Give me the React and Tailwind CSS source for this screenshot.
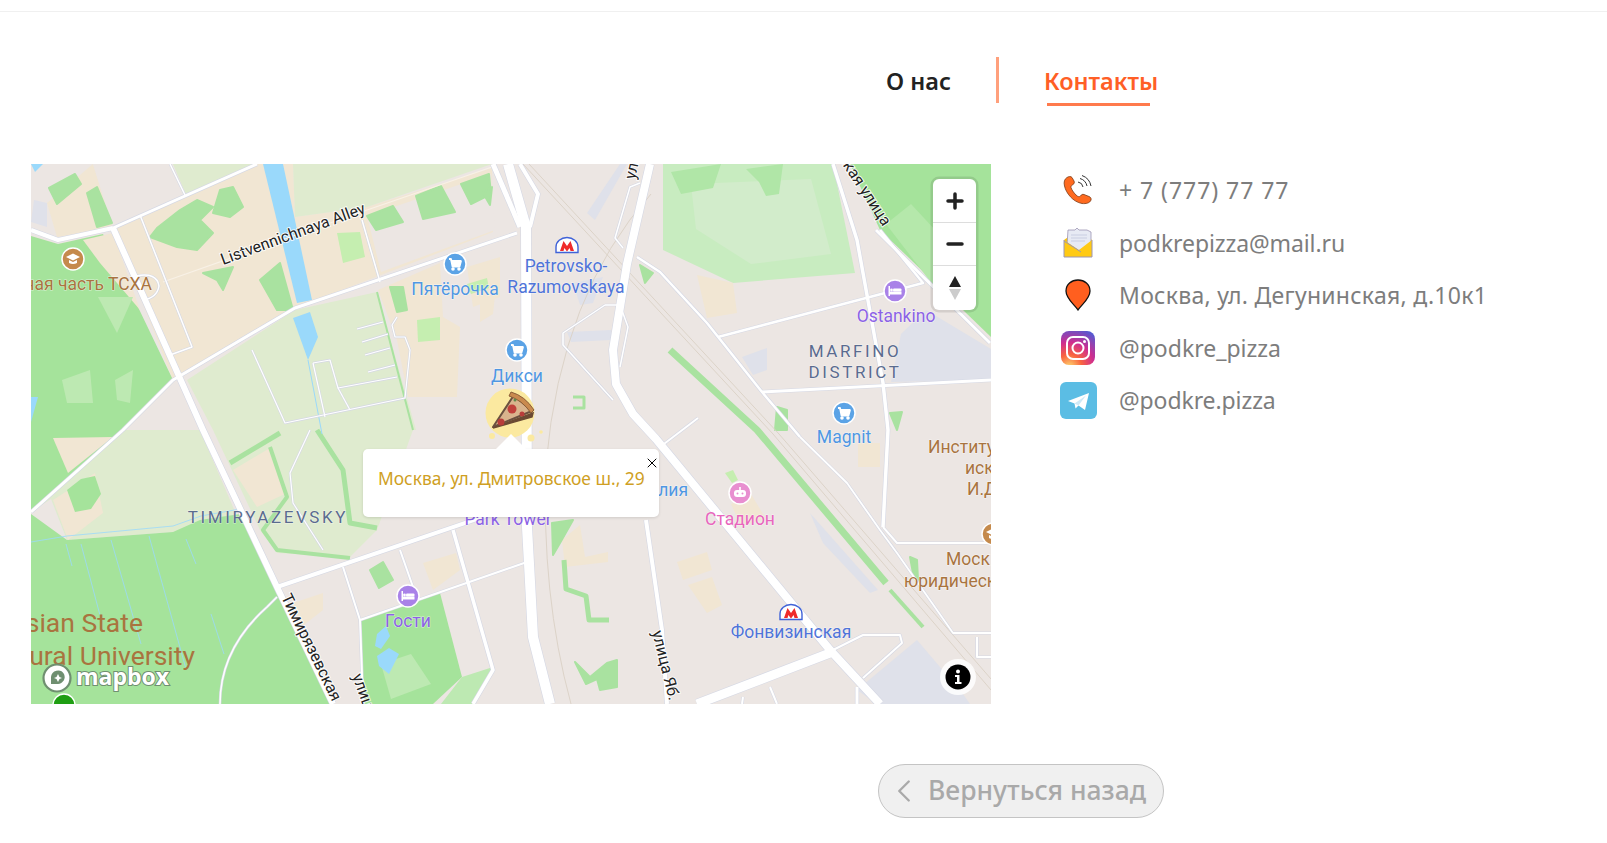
import React from 'react';
import { ChevronLeft, X } from 'lucide-react';

const FONT = "[font-family:'Noto_Sans',sans-serif]";
const MAP_FONT = "[font-family:'Roboto',sans-serif]";

const BROWN = '#a9743f';
const BLUE = '#4f97e3';
const METRO = '#4f74d9';
const PURPLE = '#8c62e6';
const SLATE = '#5a6b8f';

// all shapes are in map coordinates (960x540)
const polys = [
    // beige blocks
    ['#f1e6d3', '82,64 226,0 262,0 264,53 336,43 461,4 462,68 264,144 142,216'],
    ['#ece6e3', '336,52 460,10 464,66 350,108'],
    ['#f1e6d3', '347,126 409,99 412,153 429,163 426,233 377,233 366,176'],
    ['#f1e6d3', '436,103 469,93 469,133 442,143'],
    ['#f1e6d3', '16,39 62,0 82,64 26,73'],
    ['#ece6e3', '62,0 150,0 226,0 120,48 82,64'],
    ['#dfebcf', '142,0 226,0 155,31'],
    ['#dfebcf', '262,0 461,0 336,43 264,53'],
    // parks
    ['#a5e39b', '0,72 27,80 72,70 142,216 92,266 0,348'],
    ['#f1e6d3', '52,76 82,69 109,146 69,99'],
    ['#dfebcf', '0,348 92,266 169,266 205,350 142,368 36,376 20,335'],
    ['#a5e39b', '0,350 36,376 142,368 169,356 209,350 246,423 302,540 0,540'],
    ['#dfebcf', '156,216 264,146 346,128 385,266 182,266'],
    ['#dfebcf', '182,266 382,266 346,366 319,393 246,389 229,366'],
    ['#f1e6d3', '22,274 82,273 37,309'],
    ['#f1e6d3', '22,336 64,309 72,349 37,376'],
    ['#a5e39b', '36,326 50,315 64,312 70,330 60,345 44,348'],
    ['#f1e6d3', '202,306 239,284 256,329 226,343'],
    ['#bde9b2', '31,216 59,206 62,239 36,239'],
    ['#bde9b2', '84,216 102,206 99,239 86,236'],
    ['#bde9b2', '67,133 102,133 86,169'],
    // north park
    ['#c8ecc0', '632,0 802,0 824,109 702,119 632,86'],
    ['#d2eccb', '660,20 780,15 800,90 720,100 665,65'],
    ['#a5e39b', '819,0 960,0 960,173 849,66'],
    ['#b5e8ab', '855,60 880,40 945,110 905,125'],
    ['#b0e6a7', '715,5 752,0 748,30 735,32 728,18'],
    ['#b0e6a7', '640,8 690,0 682,24 650,30'],
    // south park
    ['#a5e39b', '329,456 409,429 431,513 402,540 332,540'],
    ['#bde9b2', '431,513 462,503 442,540 410,540'],
    ['#bde9b2', '350,500 380,490 400,520 360,535'],
    // beige
    ['#f1e6d3', '666,111 702,119 706,149 676,154'],
    ['#f1e6d3', '392,399 425,389 429,406 402,426'],
    ['#f1e6d3', '262,439 292,429 292,446 269,464'],
    ['#f1e6d3', '646,398 676,388 681,406 652,416'],
    ['#f1e6d3', '657,421 681,413 691,441 676,449'],
    ['#f1e6d3', '531,376 549,361 554,393 577,388 577,398 534,403'],
    ['#f1e6d3', '827,279 849,279 849,303 827,303'],
    ['#f1e6d3', '700,340 720,330 735,355 710,362'],
    ['#f1e6d3', '449,104 468,94 462,150 449,158'],
    // grey blue
    ['#dfe1ea', '895,146 960,185 960,216 860,218 870,170'],
    ['#dfe1ea', '711,193 736,184 736,206 722,211'],
    ['#dfe1ea', '556,49 589,0 596,0 564,56'],
    ['#dfe1ea', '536,168 580,166 580,176 540,178'],
    ['#dfe1ea', '542,119 572,113 562,139 549,141'],
    ['#dfe1ea', '826,526 886,476 932,530 939,540 846,540'],
    ['#dfe1ea', '779,349 847,426 839,429 792,379'],
    ['#dfe1ea', '3,36 16,39 16,63 0,58'],
    // water
    ['#9ad9fb', '232,0 252,0 281,136 266,139'],
    ['#9ad9fb', '262,154 279,148 287,173 277,196'],
    ['#9ad9fb', '0,233 7,233 0,258'],
    ['#9ad9fb', '346,470 355,462 359,472 350,485 344,482'],
    ['#9ad9fb', '346,492 358,484 368,490 358,510 348,502'],
    ['#9ad9fb', '0,0 12,0 4,8'],
    // tree patches
    ['#a9e2a0', '149,46 166,36 182,43 169,56 182,69 166,86 146,83 119,73 126,64'],
    ['#a9e2a0', '189,26 202,23 212,43 199,53 182,49'],
    ['#a9e2a0', '229,116 249,99 262,146 246,146'],
    ['#a9e2a0', '172,109 202,103 192,126 186,116'],
    ['#a9e2a0', '56,29 66,23 81,59 66,63'],
    ['#a9e2a0', '18,24 44,10 50,20 26,40'],
    ['#a9e2a0', '336,52 362,42 372,58 345,66'],
    ['#a9e2a0', '385,32 410,22 424,48 392,55'],
    ['#a9e2a0', '430,20 458,10 460,30 440,40'],
    ['#a9e2a0', '359,123 372,123 376,146 366,148'],
    ['#c5eeb0', '306,69 329,68 334,93 312,99'],
    ['#c5eeb0', '386,156 409,153 409,176 387,178'],
    ['#c5eeb0', '436,120 456,114 458,124 440,130'],
    ['#a9e2a0', '452,29 461,23 459,41'],
    ['#a9e2a0', '609,101 622,109 614,119'],
    ['#a9e2a0', '746,243 756,246 756,266 744,266'],
    ['#a9e2a0', '859,249 871,248 866,266'],
    ['#a9e2a0', '521,359 542,356 529,379 522,391'],
    ['#a9e2a0', '544,498 559,513 576,499 586,496 586,523 569,526 566,515 555,520'],
    ['#a9e2a0', '879,393 886,396 887,416 882,409'],
    ['#c5eeb0', '694,309 702,306 707,316 701,319'],
    ['#a9e2a0', '339,406 352,398 362,416 348,424'],
];

const greenLines = [
    ['M199 299 L249 269', 5],
    ['M239 283 L256 333 L232 366 L246 386 L319 394', 4],
    ['M286 266 L312 306 L319 359 L346 364', 5],
    ['M346 128 L382 266', 2],
    ['M639 186 L726 266 L855 419', 7],
    ['M859 426 L892 463', 4],
    ['M533 396 L535 425 L555 432 L558 456 L578 456', 5],
    ['M542 233 H553 V244 H542', 3],
];

const rails = ['M492 0 L742 270 L960 526', 'M498 0 L748 270 L960 515', 'M620 30 Q530 130 515 300 Q510 430 540 540'];

const roads = [
    ['M82 64 L172 266 L246 423 L302 540', 6],
    ['M0 66 L27 76 L82 64', 4],
    ['M82 64 L226 0', 3],
    ['M105 112 Q126 108 128 122 Q126 134 112 136', 1.5],
    ['M109 51 L161 183 L139 191', 1.5],
    ['M331 56 L349 118', 1.5],
    ['M139 0 L154 31', 1.5],
    ['M486 69 L264 144 L142 216 L92 266 L0 348', 3],
    ['M221 186 L254 259 L374 234 L379 186 L374 173 L364 173 L361 161 L366 153', 1.2],
    ['M282 199 L299 196 L307 224 L366 213', 1.2],
    ['M282 199 L294 253', 1.2],
    ['M307 224 L319 246', 1.2],
    ['M326 165 L352 158', 1.2],
    ['M331 178 L357 170', 1.2],
    ['M334 191 L359 184', 1.2],
    ['M337 208 L364 201', 1.2],
    ['M279 266 L259 309 L262 339 L292 386', 1.2],
    ['M246 433 L236 443 Q189 485 189 540', 1.5],
    ['M246 423 L490 340', 4],
    ['M312 403 L329 456 L332 540', 2],
    ['M329 456 L496 398', 2],
    ['M422 366 L462 506 L442 540', 3.5],
    ['M369 386 L382 423', 2],
    ['M462 0 L489 63', 5],
    ['M489 0 L507 30 L499 63', 4],
    ['M477 0 L495 63 L496 363 L502 473 L519 540', 10],
    ['M615 356 L631 466 L636 540', 4],
    ['M619 0 L596 100 L582 186 L585 220 L602 250 L625 275 L799 486 L849 540', 8],
    ['M609 19 L599 23 L584 74 L592 84', 1.5],
    ['M574 141 L532 169 L532 181 L582 236', 1.5],
    ['M574 141 L589 141 L597 163 L589 203', 1.5],
    ['M492 73 L492 149', 1.2],
    ['M629 283 L667 254', 2],
    ['M666 540 L799 489', 9],
    ['M802 486 L832 471 L869 471 L871 479 L832 514', 2],
    ['M712 533 L711 540', 2],
    ['M739 523 L746 540', 2],
    ['M826 523 L826 540', 3],
    ['M769 273 L816 319 L849 366 L866 389 L922 469 L960 469', 1.8],
    ['M852 363 L866 379 L960 379', 2],
    ['M946 473 L946 493 L960 493', 2],
    ['M687 173 L892 119 L849 66', 2.5],
    ['M845 66 L959 179', 3],
    ['M802 0 L826 76 L852 219 L857 266 L852 363', 3.5],
    ['M731 228 L960 216', 3],
    ['M606 93 L629 108 L676 159 L731 228 L769 273', 2.5],
];

const labels = [
    { t: 'ная часть ТСХА', x: 121, y: 126, c: BROWN, a: 'end' },
    { t: 'Пятёрочка', x: 424, y: 131, c: BLUE },
    { t: 'Дикси', x: 486, y: 218, c: BLUE },
    { t: 'Petrovsko-', x: 535, y: 108, c: METRO },
    { t: 'Razumovskaya', x: 535, y: 129, c: METRO },
    { t: 'Ostankino', x: 865, y: 158, c: PURPLE },
    { t: 'Magnit', x: 813, y: 279, c: BLUE },
    { t: 'Институт', x: 897, y: 289, c: BROWN, a: 'start' },
    { t: 'иск', x: 934, y: 310, c: BROWN, a: 'start' },
    { t: 'И.Д.', x: 936, y: 331, c: BROWN, a: 'start' },
    { t: 'Моск', x: 915, y: 401, c: BROWN, a: 'start' },
    { t: 'юридическ', x: 873, y: 423, c: BROWN, a: 'start' },
    { t: 'Стадион', x: 709, y: 361, c: '#e866bd' },
    { t: 'Фонвизинская', x: 760, y: 474, c: METRO },
    { t: 'олия', x: 657, y: 332, c: BLUE, a: 'end' },
    { t: 'Park Tower', x: 477, y: 361, c: PURPLE },
    { t: 'Гости', x: 377, y: 463, c: PURPLE },
];

const districts = [
    { t: 'MARFINO', x: 824, y: 193 },
    { t: 'DISTRICT', x: 824, y: 214 },
    { t: 'TIMIRYAZEVSKY', x: 237, y: 359 },
];

const streets = [
    { t: 'Listvennichnaya Alley', x: 192, y: 101, r: -20, a: 'start' },
    { t: 'Тимирязевская', x: 250, y: 433, r: 64, a: 'start' },
    { t: 'улица', x: 321, y: 512, r: 70, a: 'start' },
    { t: 'улица Яб.', x: 621, y: 468, r: 76, a: 'start' },
    { t: 'ул', x: 604, y: 16, r: -78, a: 'start' },
    { t: 'ская улица', x: 807, y: -6, r: 57, a: 'start' },
];

const Poi = ({ x, y, color, children }) => (
    <g transform={`translate(${x} ${y})`}>
        <circle r="11" fill={color} stroke="#fff" strokeWidth="1.5" />
        {children}
    </g>
);

const Cart = () => (
    <g fill="none" stroke="#fff" strokeWidth="1.8" strokeLinejoin="round">
        <path d="M-6 -5 H-4 L-2.5 2.5 H4.5 L6 -3 H-3.5" fill="#fff" />
        <circle cx="-2" cy="5" r="0.9" fill="#fff" />
        <circle cx="4" cy="5" r="0.9" fill="#fff" />
    </g>
);

const Bed = () => (
    <g fill="#fff">
        <rect x="-6.5" y="-5" width="1.5" height="10" />
        <rect x="-5" y="0.5" width="11.5" height="3" />
        <rect x="-2" y="-2.5" width="8.5" height="3" rx="1" />
        <circle cx="-3.5" cy="-1" r="1.4" />
    </g>
);

const Cap = () => (
    <g fill="#fff">
        <path d="M-7 -2 L0 -5.5 L7 -2 L0 1.5 Z" />
        <path d="M-4 1 V4 Q0 6 4 4 V1 L0 3 Z" />
    </g>
);

const Robot = () => (
    <g fill="#fff">
        <rect x="-6" y="-3" width="12" height="7" rx="3" />
        <rect x="-0.8" y="-6" width="1.6" height="3" />
        <circle cx="-2.5" cy="0.5" r="1" fill="#e88fd0" />
        <circle cx="2.5" cy="0.5" r="1" fill="#e88fd0" />
    </g>
);

const Metro = ({ x, y }) => (
    <g transform={`translate(${x} ${y})`}>
        <path d="M-11 7.5 V2 A11 9.5 0 0 1 11 2 V7.5 Z" fill="#fff" stroke="#3f62d8" strokeWidth="1.4" />
        <path d="M-7 6 L-3.5 -4 L0 1 L3.5 -4 L7 6 H3.5 L2.6 3 L0 6.5 L-2.6 3 L-3.5 6 Z" fill="#ef2b2b" />
    </g>
);

const MapLayer = () => (
    <svg viewBox="0 0 960 540" className="w-full h-full block bg-[#ece6e3]">
        {polys.map(([fill, points], i) => (
            <polygon key={i} points={points} fill={fill} stroke={fill === '#a9e2a0' ? fill : 'none'} strokeWidth="2" strokeLinejoin="round" />
        ))}
        {greenLines.map(([d, w], i) => <path key={i} d={d} fill="none" stroke="#a9e2a0" strokeWidth={w} strokeLinejoin="round" />)}
        <path d="M277 196 L291 270" stroke="#9ad9fb" strokeWidth="1" fill="none" />
        <path d="M0 378 L36 372 L142 362 L170 352 L209 345" stroke="#9ad9fb" strokeWidth="0.8" fill="none" />
        <path d="M35 380 L41 402 M50 380 L70 455 M80 376 L110 480 M118 372 L155 505 M155 375 L165 400 M180 450 L193 490" stroke="#9ad9fb" strokeWidth="0.8" fill="none" />
        {rails.map((d, i) => <path key={i} d={d} fill="none" stroke="#dcd3c8" strokeWidth="1" />)}
        <path d="M132 118 L336 46 L461 3" fill="none" stroke="#f8f1e6" strokeWidth="1.2" />
        {roads.map(([d, w], i) => <path key={i} d={d} fill="none" stroke="#d5d8e4" strokeWidth={w + 1.2} strokeLinejoin="round" />)}
        {roads.map(([d, w], i) => <path key={i} d={d} fill="none" stroke="#fff" strokeWidth={w} strokeLinejoin="round" />)}

        <g className={MAP_FONT} fontSize="17.5" stroke="#fff" strokeWidth="1" strokeOpacity="0.6">
            {labels.map(l => (
                <text key={l.t} x={l.x} y={l.y} fill={l.c} textAnchor={l.a || 'middle'} className="[paint-order:stroke]">{l.t}</text>
            ))}
        </g>
        <g className={MAP_FONT} fontSize="17" fill={SLATE} letterSpacing="2.6" textAnchor="middle" stroke="#fff" strokeWidth="1" strokeOpacity="0.5">
            {districts.map(l => <text key={l.t} x={l.x} y={l.y} className="[paint-order:stroke]">{l.t}</text>)}
        </g>
        <g className={MAP_FONT} fontSize="16" fill="#222" stroke="#fff" strokeWidth="2" strokeOpacity="0.85">
            {streets.map(l => (
                <text key={l.t} x={l.x} y={l.y} transform={`rotate(${l.r} ${l.x} ${l.y})`} className="[paint-order:stroke]">{l.t}</text>
            ))}
        </g>
        <g className={MAP_FONT} fontSize="26.5" fill={BROWN} textAnchor="end">
            <text x="112" y="468">Russian State</text>
            <text x="164" y="501">Agricultural University</text>
        </g>

        <Poi x={42} y={95} color="#c58a4c"><Cap /></Poi>
        <Poi x={424} y={100} color="#5ba3e6"><Cart /></Poi>
        <Poi x={486} y={186} color="#5ba3e6"><Cart /></Poi>
        <Poi x={813} y={249} color="#5ba3e6"><Cart /></Poi>
        <Poi x={864} y={127} color="#a982e8"><Bed /></Poi>
        <Poi x={377} y={432} color="#a982e8"><Bed /></Poi>
        <Poi x={709} y={329} color="#e88fd0"><Robot /></Poi>
        <Poi x={962} y={370} color="#c58a4c"><Cap /></Poi>
        <Metro x={536} y={81} />
        <Metro x={760} y={448} />
        <circle cx="33" cy="541" r="11" fill="#1e9e12" stroke="#fff" strokeWidth="1.5" />

        {/* pizza marker */}
        <circle cx="479" cy="249" r="24.5" fill="#fbe9a0" />
        <circle cx="461" cy="272" r="3" fill="#fbe9a0" />
        <circle cx="500" cy="274" r="3.5" fill="#fbe9a0" />
        <circle cx="510" cy="268" r="1.8" fill="#fbe9a0" />
        <path d="M462 263 L483 231 L501 247 Z" fill="#d9b48d" stroke="#6b5140" strokeWidth="2" strokeLinejoin="round" />
        <path d="M480 228 Q494 232 503 246 L500 249 Q491 236 478 232 Z" fill="#c98a4e" stroke="#8a5c36" strokeWidth="1" />
        <path d="M462 264 L502 249 L501 253 Z" fill="#6b4a33" stroke="#6b4a33" strokeWidth="1.5" />
        <circle cx="481" cy="245" r="4.5" fill="#c0413b" />
        <circle cx="470" cy="258" r="3.5" fill="#b83d3a" />
        <circle cx="491" cy="250" r="2.5" fill="#b83d3a" />
        <circle cx="484" cy="236" r="1.5" fill="#5f8a4a" />

        {/* mapbox logo */}
        <circle cx="26" cy="514" r="13.5" fill="#fff" stroke="#6f8f70" strokeWidth="2.2" />
        <path d="M20 520 L20 513 A7 7 0 0 1 33 510 A7 7 0 0 1 27 520 Z" fill="#6f8f70" />
        <path d="M27 510 L28.5 513 L31 514 L28.5 515 L27 518 L25.500 515 L23 514 L25.500 513 Z" fill="#fff" />
        <text x="45" y="521" fontSize="23" fontWeight="700" fill="#fff" stroke="#6f8f70" strokeWidth="2" className="[font-family:'Open_Sans',sans-serif] [paint-order:stroke]">mapbox</text>
    </svg>
);

const MapControls = () => (
    <div className="absolute top-[15px] right-[15px] w-[43px] bg-white rounded-[6px] shadow-[0_0_0_2.500px_rgba(0,0,0,0.1)] flex flex-col">
        <button className="h-[44px] flex items-center justify-center border-b border-[#ddd]">
            <svg width="20" height="20" viewBox="0 0 20 20"><path d="M10 3 V17 M3 10 H17" stroke="#222" strokeWidth="3.5" strokeLinecap="round" /></svg>
        </button>
        <button className="h-[43px] flex items-center justify-center border-b border-[#ddd]">
            <svg width="20" height="20" viewBox="0 0 20 20"><path d="M3 10 H17" stroke="#222" strokeWidth="3.5" strokeLinecap="round" /></svg>
        </button>
        <button className="h-[44px] flex items-center justify-center">
            <svg width="14" height="30" viewBox="0 0 14 30">
                <path d="M1 14 L7 3 L13 14 Z" fill="#222" />
                <path d="M1 16 L7 27 L13 16 Z" fill="#ccc" />
            </svg>
        </button>
    </div>
);

const MapInfo = () => (
    <div className="absolute left-[909px] top-[495px] w-[36px] h-[36px] rounded-full bg-white/85 flex items-center justify-center">
        <svg width="26" height="26" viewBox="0 0 26 26">
            <circle cx="13" cy="13" r="12.500" fill="#000" />
            <circle cx="13" cy="7.500" r="2" fill="#fff" />
            <path d="M10 11 H14.500 V18 H16.500 V20 H10 V18 H12 V13 H10 Z" fill="#fff" />
        </svg>
    </div>
);

const MapPopup = () => (
    <div className="absolute left-[332px] top-[285px] w-[296px] h-[68px] bg-white rounded-[5px] shadow-[0_1px_3px_rgba(0,0,0,0.12)] pt-[17px] pl-[15px]">
        <div className="absolute -top-[15px] left-[133px] w-0 h-0 border-x-[15px] border-b-[15px] border-x-transparent border-b-white" />
        <X className="absolute top-[6px] -right-[1px] w-[16px] h-[16px] text-black" strokeWidth={1.5} />
        <p className="text-[17.4px] leading-[24px] text-[#cf9f24] whitespace-nowrap">Москва, ул. Дмитровское ш., 29</p>
    </div>
);

const PhoneIcon = () => (
    <svg width="30" height="30" viewBox="0 0 30 30">
        <path d="M4 2.500 C1.500 4 0.500 7 1.500 11 C3 18 10 27 19 28.500 C23 29 27 28 28 25 C28.500 23.500 27.500 22 26 21.500 L21 19.500 C19.500 19 18.500 19.500 17.500 21 C16.500 22 15 22 13 20 C10.500 17.500 8.500 14.500 8 12.500 C7.800 11 8.500 10.500 10 9.500 C11.500 8.500 11.500 7.500 11 6 L9 2.500 C8 1 5.500 1.500 4 2.500 Z" fill="#ff6a1f" stroke="#7a3a16" strokeWidth="0.8" />
        <path d="M15 7 A6 6 0 0 1 20 12 M17 3.500 A10 10 0 0 1 24 11 M19 0.500 A14 14 0 0 1 28 11" fill="none" stroke="#333" strokeWidth="1" />
    </svg>
);

const MailIcon = () => (
    <svg width="30" height="31" viewBox="0 0 30 31">
        <path d="M1 13 L15 3 L29 13 V30 H1 Z" fill="#fbc40d" />
        <path d="M5 3 H12 L14 1 L16 3 H24 L28 5 V18 L15 24 L4 18 Z" fill="#e7eaf4" stroke="#9d96b4" strokeWidth="0.8" />
        <path d="M8 8 H24 M8 11 H24 M8 14 H22" stroke="#d3d8e8" strokeWidth="1.5" />
        <path d="M1 13 L16 23 L29 13 V30 H1 Z" fill="#ffca14" />
        <path d="M1 13 V30 H29 V13 M1 14 L18 25" fill="none" stroke="#9d96b4" strokeWidth="1" />
    </svg>
);

const PinIcon = () => (
    <svg width="26" height="32" viewBox="0 0 26 32">
        <path d="M13 31 C10 26 1 20 1 12 C1 5.500 6.500 1 13 1 C19.500 1 25 5.500 25 12 C25 20 16 26 13 31 Z" fill="#ff5f1f" stroke="#111" strokeWidth="1.3" />
    </svg>
);

const InstagramIcon = () => (
    <svg width="34" height="34" viewBox="0 0 34 34">
        <defs>
            <radialGradient id="ig" cx="25%" cy="105%" r="120%">
                <stop offset="0%" stopColor="#fdd56e" />
                <stop offset="30%" stopColor="#f9643f" />
                <stop offset="60%" stopColor="#cf2d8f" />
                <stop offset="100%" stopColor="#4f5bd5" />
            </radialGradient>
        </defs>
        <rect width="34" height="34" rx="8" fill="url(#ig)" />
        <rect x="6" y="6" width="22" height="22" rx="6" fill="none" stroke="#fff" strokeWidth="2" />
        <circle cx="17" cy="17" r="5.500" fill="none" stroke="#fff" strokeWidth="2" />
        <circle cx="23.500" cy="10.500" r="1.500" fill="#fff" />
    </svg>
);

const TelegramIcon = () => (
    <svg width="37" height="37" viewBox="0 0 37 37">
        <rect width="37" height="37" rx="6" fill="#5bbde4" />
        <path d="M8 19 L29 11 L25 28 L18.500 23.500 L15.500 26.500 L14.500 21.500 Z" fill="#fff" />
        <path d="M14.500 21.500 L26 13.500 L18.500 23.500" fill="#cfe9f6" />
    </svg>
);

const contacts = [
    { text: '+ 7 (777) 77 77', icon: PhoneIcon, spacing: 'tracking-[0.95px]' },
    { text: 'podkrepizza@mail.ru', icon: MailIcon, spacing: 'tracking-[-0.1px]' },
    { text: 'Москва, ул. Дегунинская, д.10к1', icon: PinIcon, spacing: 'tracking-[0.28px]' },
    { text: '@podkre_pizza', icon: InstagramIcon, spacing: 'tracking-[0px]' },
    { text: '@podkre.pizza', icon: TelegramIcon, spacing: 'tracking-[-0.1px]' },
];

const ContactRow = ({ text, icon: Icon, spacing }) => (
    <div className="flex items-center h-[52.5px]">
        <div className="w-[38px] flex justify-center shrink-0"><Icon /></div>
        <p className={`ml-[22px] text-[23px] text-[#7d7d7d] whitespace-nowrap ${spacing}`}>{text}</p>
    </div>
);

export default function App() {
    return (
        <div className={`min-h-[843px] bg-white overflow-hidden ${FONT}`}>
            <div className="h-[12px] border-b border-[#f0f0f0]" />

            <nav className="flex items-start pt-[45px] pl-[886px]">
                <span className="mt-[9px] w-[65px] text-[23.5px] leading-[30px] font-semibold text-[#222] whitespace-nowrap">О нас</span>
                <span className="ml-[45px] w-[3px] h-[46px] bg-[#ffa07c]" />
                <div className="ml-[45px] mt-[9px] flex flex-col items-start w-[112px]">
                    <span className="text-[23.5px] leading-[30px] font-semibold text-[#ff5f26] whitespace-nowrap">Контакты</span>
                    <span className="mt-[7px] ml-[3px] w-[103px] h-[3px] bg-[#ff7a4d]" />
                </div>
            </nav>

            <section className="flex items-start mt-[58px] pl-[31px]">
                <div className="relative w-[960px] h-[540px] overflow-hidden shrink-0">
                    <MapLayer />
                    <MapControls />
                    <MapInfo />
                    <MapPopup />
                </div>
                <div className="ml-[68px] flex flex-col">
                    {contacts.map(c => <ContactRow key={c.text} {...c} />)}
                </div>
            </section>

            <div className="flex mt-[60px] pl-[878px]">
                <button className="w-[286px] h-[54px] rounded-full bg-[#f0f0f0] border border-[#c4c4c4] flex items-center pl-[6px] text-[#a9a9a9]">
                    <ChevronLeft className="w-[38px] h-[38px] shrink-0" strokeWidth={1.5} />
                    <span className="ml-[5px] text-[26.5px] font-medium whitespace-nowrap">Вернуться назад</span>
                </button>
            </div>
        </div>
    );
}
